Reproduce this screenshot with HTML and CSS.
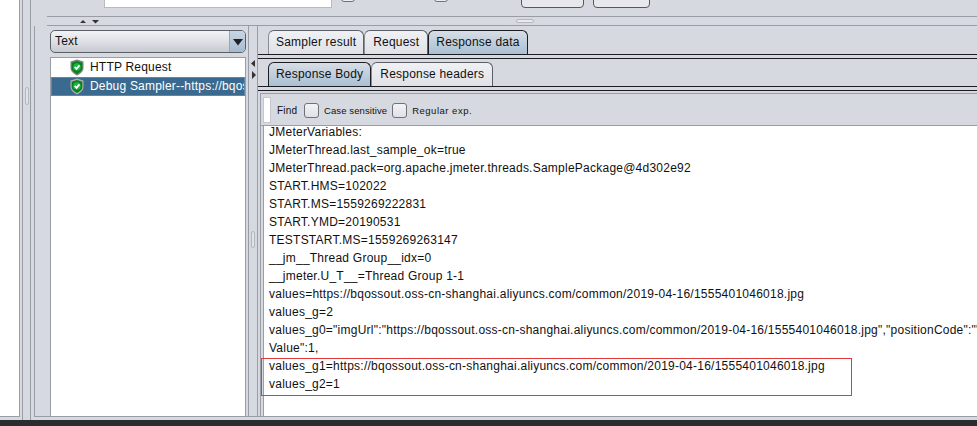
FILE: index.html
```html
<!DOCTYPE html>
<html lang="en">
<head>
<meta charset="utf-8">
<title>JMeter results</title>
<link rel="stylesheet" href="styles.css">
</head>
<body>
<div class="window">
  <div class="blank"></div>
  <div class="gutter"></div>
  <div class="gutter-wide"><div class="gutter-grip"></div></div>
  <div class="frame">
    <div class="top">
      <div class="field"></div>
      <div class="box box-a"></div>
      <div class="box box-b"></div>
      <div class="btn btn-a"></div>
      <div class="btn btn-b"></div>
    </div>
    <div class="divider">
      <div class="arrows">
        <svg width="19" height="5" viewBox="0 0 19 5"><path d="M0 4 L3 1 L6 4Z M12 1 L19 1 L15.500 4.500Z" fill="#333"/></svg>
      </div>
      <div class="grip"></div>
    </div>
    <div class="main">
      <div class="left">
        <div class="combo">
          <span class="combo-text">Text</span>
          <span class="combo-btn"><svg width="10" height="8" viewBox="0 0 10 8"><path d="M0 1H10L5 7.500Z" fill="#222"/></svg></span>
        </div>
        <div class="list">
          <div class="row">
            <svg class="shield" width="14" height="17" viewBox="0 0 14 17"><path d="M7 .5 L13.500 2.500 V9 C13.500 12.500 10 15 7 16.500 C4 15 .5 12.500 .5 9 V2.500Z" fill="#7f857e"/><path d="M7 2 L12.300 3.700 V9 C12.300 11.500 9.500 13.700 7 15 C4.500 13.700 1.700 11.500 1.700 9 V3.700Z" fill="#0c7f24"/><circle cx="7" cy="8" r="3.800" fill="#1fb53f"/><path d="M4.700 8 L6.500 9.900 L9.500 6.300" fill="none" stroke="#fff" stroke-width="1.800"/></svg>
            <span>HTTP Request</span>
          </div>
          <div class="row row-on">
            <svg class="shield" width="14" height="17" viewBox="0 0 14 17"><path d="M7 .5 L13.500 2.500 V9 C13.500 12.500 10 15 7 16.500 C4 15 .5 12.500 .5 9 V2.500Z" fill="#a9afab"/><path d="M7 2 L12.300 3.700 V9 C12.300 11.500 9.500 13.700 7 15 C4.500 13.700 1.700 11.500 1.700 9 V3.700Z" fill="#0c7f24"/><circle cx="7" cy="8" r="3.800" fill="#1fb53f"/><path d="M4.700 8 L6.500 9.900 L9.500 6.300" fill="none" stroke="#fff" stroke-width="1.800"/></svg>
            <span class="clip">Debug Sampler--https://bqos</span>
          </div>
        </div>
      </div>
      <div class="split">
        <svg width="5" height="26" viewBox="0 0 5 26"><path d="M4 0 V7 L0 3.500Z M1 11 V19 L5 15Z" fill="#333"/></svg>
        <div class="split-grip"></div>
      </div>
      <div class="right">
        <div class="tabs">
          <div class="tab">Sampler result</div>
          <div class="tab tab-req">Request</div>
          <div class="tab tab-on">Response data</div>
        </div>
        <div class="tab-gap"></div>
        <div class="tabs tabs-inner">
          <div class="tab tab-on">Response Body</div>
          <div class="tab tab-head">Response headers</div>
        </div>
        <div class="tab-gap"></div>
        <div class="pane">
          <div class="find">
            <div class="find-field"></div>
            <span class="find-label">Find</span>
            <div class="check"></div>
            <span class="small">Case sensitive</span>
            <div class="check check-b"></div>
            <span class="small small-wide">Regular exp.</span>
          </div>
          <div class="text">
            <div class="line">JMeterVariables:</div>
            <div class="line">JMeterThread.last_sample_ok=true</div>
            <div class="line">JMeterThread.pack=org.apache.jmeter.threads.SamplePackage@4d302e92</div>
            <div class="line">START.HMS=102022</div>
            <div class="line">START.MS=1559269222831</div>
            <div class="line">START.YMD=20190531</div>
            <div class="line">TESTSTART.MS=1559269263147</div>
            <div class="line">__jm__Thread Group__idx=0</div>
            <div class="line">__jmeter.U_T__=Thread Group 1-1</div>
            <div class="line">values=https://bqossout.oss-cn-shanghai.aliyuncs.com/common/2019-04-16/1555401046018.jpg</div>
            <div class="line">values_g=2</div>
            <div class="line">values_g0="imgUrl":"https://bqossout.oss-cn-shanghai.aliyuncs.com/common/2019-04-16/1555401046018.jpg","positionCode":""</div>
            <div class="line">Value":1,</div>
            <div class="line">values_g1=https://bqossout.oss-cn-shanghai.aliyuncs.com/common/2019-04-16/1555401046018.jpg</div>
            <div class="line">values_g2=1</div>
          </div>
          <div class="mark"></div>
        </div>
      </div>
    </div>
  </div>
</div>
<div class="taskbar"></div>
</body>
</html>
```
FILE: styles.css
```css
* { box-sizing: border-box; }
html, body { margin: 0; padding: 0; }
body {
  width: 977px;
  height: 426px;
  overflow: hidden;
  background: #d6d9df;
  font-family: "Liberation Sans", Arial, sans-serif;
  color: #111;
  display: flex;
  flex-direction: column;
}
.window { display: flex; height: 420px; overflow: hidden; flex: none; }
.blank { width: 20px; height: 417px; background: #fff; border-right: 1px solid #9a9da6; border-bottom: 1px solid #9a9da6; flex: none; }
.gutter { width: 3px; border-right: 1px solid #9a9da6; flex: none; }
.gutter-wide { width: 8px; border-right: 1px solid #9a9da6; padding: 87px 0 0 2px; flex: none; }
.gutter-grip { width: 4px; height: 18px; background: #e0e2e6; border: 1px solid #b3b6bd; border-radius: 2px; }
.frame { width: 946px; display: flex; flex-direction: column; flex: none; }
.top {
  height: 17px;
  margin-left: 16px;
  padding: 0 0 8px 57px;
  border-bottom: 1px solid #9a9da6;
  display: flex;
  align-items: flex-end;
  overflow: hidden;
}
.field { width: 228px; height: 12px; background: #fff; border: 1px solid #b8bbc2; flex: none; }
.box { width: 14px; height: 12px; margin-bottom: 6px; border: 1px solid #6f727a; border-radius: 3px; background: #eceef1; flex: none; }
.box-a { margin-left: 9px; }
.box-b { margin-left: 79px; }
.btn { height: 14px; border: 1px solid #55585f; border-radius: 4px; background: #e6e8ec; flex: none; }
.btn-a { width: 63px; margin-left: 73px; }
.btn-b { width: 57px; margin-left: 9px; }
.divider {
  height: 9px;
  margin-left: 16px;
  border-bottom: 1px solid #9a9da6;
  display: flex;
  align-items: center;
}
.arrows { width: 469px; padding-left: 33px; display: flex; }
.grip { width: 18px; height: 4px; background: #e8eaee; border: 1px solid #b3b6bd; border-radius: 2px; }
.main { height: 391px; flex: none; display: flex; margin-left: 3px; border-left: 1px solid #9a9da6; border-bottom: 1px solid #9a9da6; }
.left { width: 212px; padding: 4px 1px 0 15px; display: flex; flex-direction: column; gap: 4px; flex: none; }
.combo {
  height: 23px;
  display: flex;
  justify-content: space-between;
  border: 1px solid #5c5f66;
  border-radius: 5px;
  background: linear-gradient(#f2f3f6, #dcdee3 55%, #c6c9d0);
  overflow: hidden;
  flex: none;
}
.combo-text { font-size: 12px; line-height: 20px; padding-left: 4px; letter-spacing: .2px; }
.combo-btn {
  width: 16px;
  display: flex;
  align-items: center;
  justify-content: center;
  background: linear-gradient(#c9d6e3, #a4bccf);
  border-left: 1px solid #9aa5b2;
}
.list { flex: 1; background: #fff; border: 1px solid #9a9da6; border-bottom: 0; min-height: 0; }
.row { height: 19px; display: flex; align-items: center; gap: 6px; padding-left: 19px; font-size: 12px; letter-spacing: .2px; white-space: nowrap; overflow: hidden; }
.row span { position: relative; top: -1px; }
.row-on { background: #3a6a90; color: #fff; border: 1px solid #5f86a6; padding-left: 18px; }
.clip { overflow: hidden; }
.shield { flex: none; }
.split {
  width: 10px;
  flex: none;
  margin-left: 1px;
  border-left: 1px solid #9a9da6;
  border-right: 1px solid #9a9da6;
  display: flex;
  flex-direction: column;
  align-items: center;
  padding-top: 34px;
}
.split-grip { width: 4px; height: 17px; margin-top: 145px; background: #e0e2e6; border: 1px solid #b3b6bd; border-radius: 2px; }
.right { flex: 1; min-width: 0; padding-top: 4px; display: flex; flex-direction: column; overflow: hidden; }
.tabs {
  height: 25px;
  display: flex;
  align-items: flex-end;
  padding-left: 10px;
  border-bottom: 1px solid #1b1d22;
  flex: none;
}
.tabs-inner { height: 28px; }
.tab {
  height: 24px;
  padding: 0 7px;
  font-size: 12px;
  letter-spacing: .2px;
  line-height: 23px;
  border: 1px solid #5c5f66;
  border-bottom: 0;
  border-left-color: #8a8d94;
  border-radius: 6px 6px 0 0;
  background: linear-gradient(#f0f1f4, #dfe1e6);
  white-space: nowrap;
}
.tab-on { background: linear-gradient(#d8dde4, #a9c0d4); border-color: #1b1d22; }
.tab-req { padding: 0 8px; }
.tab-head { padding: 0 8px; }
.tab-gap { height: 4px; border-bottom: 1px solid #1b1d22; flex: none; }
.pane { position: relative; flex: 1; min-height: 0; margin: 2px 0 0 2px; border-left: 1px solid #9a9da6; border-top: 1px solid #9a9da6; display: flex; flex-direction: column; }
.find { height: 32px; display: flex; align-items: center; padding-left: 2px; border-bottom: 1px solid #9a9da6; flex: none; }
.find-field { width: 8px; height: 26px; background: #fff; border: 1px solid #c4c7cd; margin-right: 6px; }
.find-label { width: 27px; font-size: 10px; letter-spacing: .2px; margin-top: 2px; }
.small { font-size: 9.500px; letter-spacing: .1px; margin-top: 2px; margin-left: 5px; }
.small-wide { letter-spacing: .5px; }
.check { width: 15px; height: 15px; border: 1px solid #6f727a; border-radius: 3px; background: linear-gradient(#f2f3f6, #dfe1e6); margin-top: 1px; flex: none; }
.check-b { margin-left: 5px; }
.text { flex: 1; min-height: 0; margin-left: 2px; background: #fff; border-left: 1px solid #9a9da6; padding: 0 0 0 5px; overflow: hidden; }
.line { height: 18px; line-height: 18px; font-size: 12px; letter-spacing: .24px; white-space: nowrap; }
.line:first-child { margin-top: -3px; }
.mark { position: absolute; left: 0; top: 264px; width: 591px; height: 38px; border: 1px solid #e5383b; }
.taskbar { height: 6px; background: #2b2c30; flex: none; }
```
